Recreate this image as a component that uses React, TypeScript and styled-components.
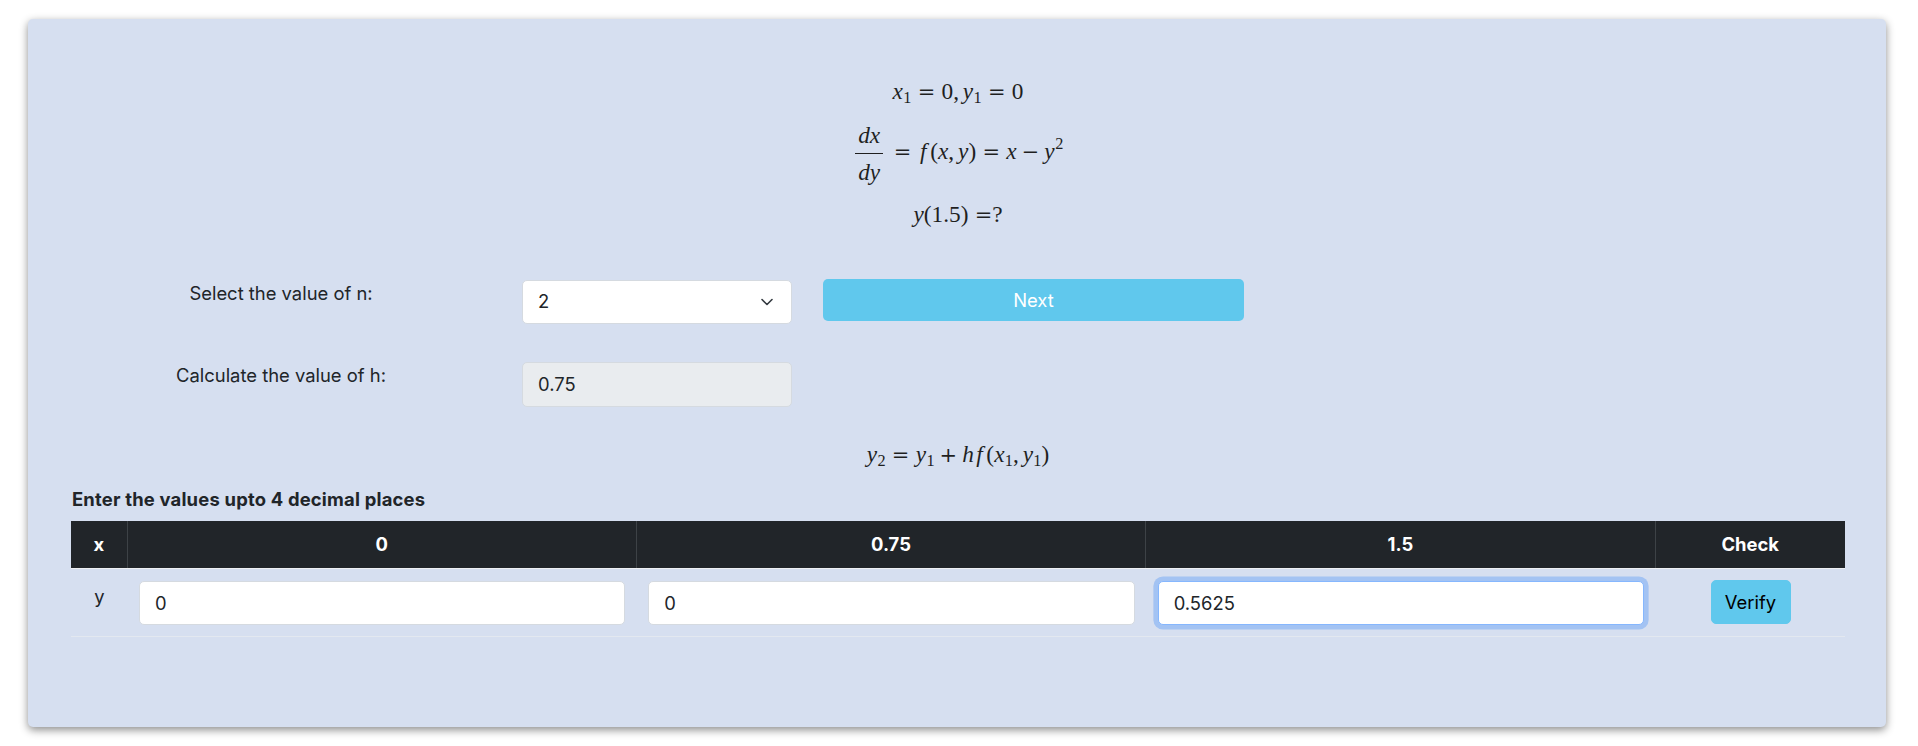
import React from "react";
import styled, { createGlobalStyle, css } from "styled-components";

const Global = createGlobalStyle`
  html, body { margin: 0; padding: 0; background: #ffffff; }
  body {
    font-family: Inter, "Liberation Sans", Arial, sans-serif;
    font-size: 18.4px;
    line-height: 1.5;
    color: #212529;
  }
  * { box-sizing: border-box; }
`;

const Page = styled.div`
  padding: 19px 32px 19px 28px;
`;

const Card = styled.div`
  height: 708px;
  background: #d6dff0;
  border-radius: 5px;
  box-shadow: 0 3px 9px rgba(0, 0, 0, 0.45);
  padding: 55px 41px 0 43px;
  display: flex;
  flex-direction: column;
`;

const MathBlock = styled.div`
  display: flex;
  flex-direction: column;
  align-items: center;
  gap: 14px;
`;

const MathLine = styled.div<{ $h?: number; $mt?: number }>`
  height: ${(p) => p.$h ?? 36}px;
  margin-top: ${(p) => p.$mt ?? 0}px;
  display: flex;
  align-items: center;
  justify-content: center;
  color: #1f1f1f;
`;

const Formula = styled.span`
  display: inline-block;
  font-family: "Liberation Serif", "DejaVu Serif", serif;
  font-size: 23.3px;
  line-height: 1.2;
  white-space: nowrap;
`;

const Var = styled.span<{ $f?: boolean }>`
  font-style: italic;
  ${(p) =>
    p.$f &&
    css`
      margin: 0 0.16em 0 0.1em;
    `}
`;

const Num = styled.span`
  font-style: normal;
`;

const Sub = styled.span`
  font-style: normal;
  font-size: 0.7em;
  vertical-align: -0.22em;
  line-height: 0;
  margin-left: 0.02em;
`;

const Sup = styled.span`
  font-style: normal;
  font-size: 0.7em;
  vertical-align: 0.62em;
  line-height: 0;
  margin-left: 0.04em;
`;

const symbolFont = css`
  font-family: "DejaVu Serif", "Liberation Serif", serif;
  font-size: 0.9em;
  font-style: normal;
`;

const Rel = styled.span<{ $noRight?: boolean }>`
  ${symbolFont};
  margin: 0 ${(p) => (p.$noRight ? "0" : "0.3em")} 0 0.3em;
`;

const Bin = styled.span`
  ${symbolFont};
  margin: 0 0.24em;
`;

const Punct = styled.span`
  margin-right: 0.1667em;
`;

const Frac = styled.span`
  display: inline-flex;
  flex-direction: column;
  align-items: center;
  vertical-align: middle;
  margin: 0 0.2em 0 0.12em;
`;

const FracPart = styled.span`
  padding: 0 0.12em;
  line-height: 1.25;
  font-style: italic;
`;

const FracBar = styled.span`
  align-self: stretch;
  height: 1px;
  background: #1f1f1f;
  margin: 3px 0 4px;
`;

const FormRow = styled.div<{ $mt: number }>`
  display: grid;
  grid-template-columns: 420px 270px 421px;
  column-gap: 31px;
  align-items: start;
  margin-top: ${(p) => p.$mt}px;
`;

const Label = styled.div`
  text-align: center;
  line-height: 27.6px;
  color: #212529;
`;

const fieldBase = css`
  height: 44px;
  border: 1px solid #d5dae0;
  border-radius: 5px;
  padding: 0 15px;
  font-family: Inter, "Liberation Sans", Arial, sans-serif;
  font-size: 18.4px;
  color: #212529;
  display: flex;
  align-items: center;
`;

const SelectBox = styled.div`
  ${fieldBase};
  background: #ffffff;
  justify-content: space-between;
  padding-right: 18px;
`;

const ReadOnlyField = styled.div`
  ${fieldBase};
  height: 45px;
  background: #e9ecef;
`;

const NextButton = styled.button`
  height: 42px;
  border: none;
  border-radius: 5px;
  background: #60c8ed;
  color: #ffffff;
  font-family: Inter, "Liberation Sans", Arial, sans-serif;
  font-size: 18.4px;
  margin-top: -1px;
`;

const Heading = styled.div`
  font-weight: 700;
  margin-top: 13px;
  line-height: 27.6px;
  padding-left: 1px;
  letter-spacing: 0.2px;
`;

const Table = styled.table`
  margin-top: 7px;
  width: 100%;
  border-collapse: collapse;
  table-layout: fixed;
`;

const HeadCell = styled.th<{ $w?: number }>`
  ${(p) => (p.$w ? `width: ${p.$w}px;` : "")}
  height: 48px;
  background: #212529;
  color: #ffffff;
  font-weight: 700;
  text-align: center;
  vertical-align: middle;
  padding: 0 12px;
  border-left: 1px solid #3d4246;
  border-bottom: 1px solid #eef0f3;
  &:first-child { border-left: none; }
`;

const BodyRow = styled.tr`
  border-bottom: 1px solid #e3e8f0;
`;

const BodyCell = styled.td<{ $center?: boolean }>`
  padding: 12px 11px 11px 12px;
  vertical-align: top;
  text-align: ${(p) => (p.$center ? "center" : "left")};
  line-height: 30px;
`;

const ValueInput = styled.div<{ $focus?: boolean }>`
  ${fieldBase};
  background: #ffffff;
  ${(p) =>
    p.$focus &&
    css`
      border-color: #86b7fe;
      box-shadow: 0 0 0 4.6px rgba(13, 110, 253, 0.25);
    `}
`;

const VerifyButton = styled.button`
  width: 80px;
  height: 44px;
  border: 1px solid #60c8ed;
  border-radius: 5px;
  background: #60c8ed;
  color: #000000;
  font-family: Inter, "Liberation Sans", Arial, sans-serif;
  font-size: 18.4px;
  margin-top: -1px;
`;

const Chevron = () => (
  <svg width="12" height="8" viewBox="0 0 12 8" fill="none">
    <path d="M1 1.5l5 5 5-5" stroke="#343a40" strokeWidth="1.6" strokeLinecap="round" strokeLinejoin="round" />
  </svg>
);

const xs = ["0", "0.75", "1.5"];
const ys = ["0", "0", "0.5625"];

export default function App() {
  return (
    <>
      <Global />
      <Page>
        <Card>
          <MathBlock>
            <MathLine>
              <Formula>
                <Var>x</Var>
                <Sub>1</Sub>
                <Rel>=</Rel>
                <Num>0</Num>
                <Punct>,</Punct>
                <Var>y</Var>
                <Sub>1</Sub>
                <Rel>=</Rel>
                <Num>0</Num>
              </Formula>
            </MathLine>
            <MathLine $h={60}>
              <Formula>
                <Frac>
                  <FracPart>dx</FracPart>
                  <FracBar />
                  <FracPart>dy</FracPart>
                </Frac>
                <Rel>=</Rel>
                <Var $f>f</Var>
                <Num>(</Num>
                <Var>x</Var>
                <Punct>,</Punct>
                <Var>y</Var>
                <Num>)</Num>
                <Rel>=</Rel>
                <Var>x</Var>
                <Bin>−</Bin>
                <Var>y</Var>
                <Sup>2</Sup>
              </Formula>
            </MathLine>
            <MathLine $mt={-1}>
              <Formula>
                <Var>y</Var>
                <Num>(1.5)</Num>
                <Rel $noRight>=</Rel>
                <Num>?</Num>
              </Formula>
            </MathLine>
          </MathBlock>

          <FormRow $mt={47}>
            <Label>Select the value of n:</Label>
            <SelectBox>
              <span>2</span>
              <Chevron />
            </SelectBox>
            <NextButton>Next</NextButton>
          </FormRow>

          <FormRow $mt={38}>
            <Label>Calculate the value of h:</Label>
            <ReadOnlyField>0.75</ReadOnlyField>
          </FormRow>

          <MathLine $mt={30}>
            <Formula>
              <Var>y</Var>
              <Sub>2</Sub>
              <Rel>=</Rel>
              <Var>y</Var>
              <Sub>1</Sub>
              <Bin>+</Bin>
              <Var>h</Var>
              <Var $f>f</Var>
              <Num>(</Num>
              <Var>x</Var>
              <Sub>1</Sub>
              <Punct>,</Punct>
              <Var>y</Var>
              <Sub>1</Sub>
              <Num>)</Num>
            </Formula>
          </MathLine>

          <Heading>Enter the values upto 4 decimal places</Heading>

          <Table>
            <thead>
              <tr>
                <HeadCell $w={56}>x</HeadCell>
                {xs.map((x) => (
                  <HeadCell key={x}>{x}</HeadCell>
                ))}
                <HeadCell $w={190}>Check</HeadCell>
              </tr>
            </thead>
            <tbody>
              <BodyRow>
                <BodyCell $center>y</BodyCell>
                {ys.map((y, i) => (
                  <BodyCell key={i}>
                    <ValueInput $focus={i === 2}>{y}</ValueInput>
                  </BodyCell>
                ))}
                <BodyCell $center>
                  <VerifyButton>Verify</VerifyButton>
                </BodyCell>
              </BodyRow>
            </tbody>
          </Table>
        </Card>
      </Page>
    </>
  );
}
